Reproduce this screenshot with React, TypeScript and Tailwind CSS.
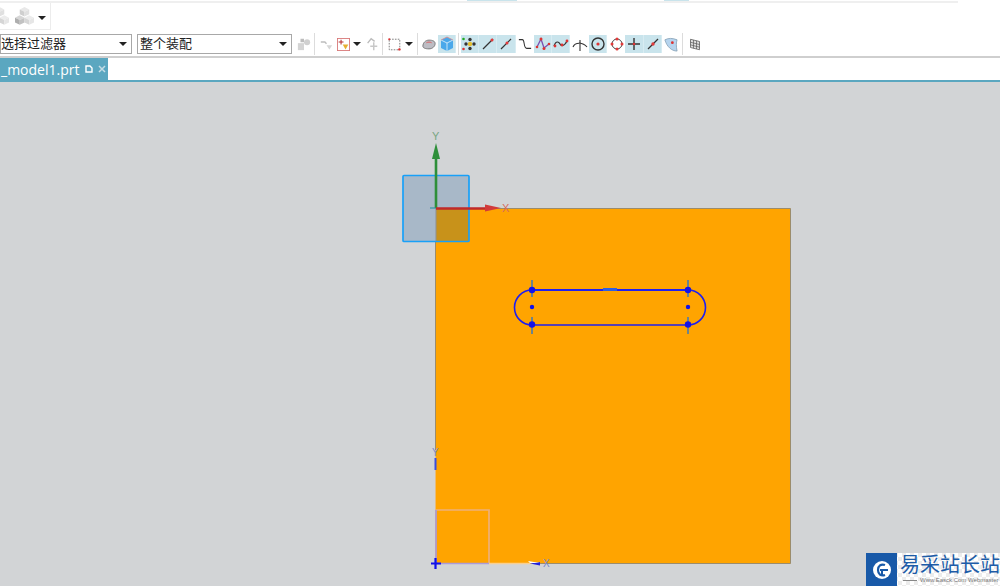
import type { ReactNode } from 'react';

const cjk = "font-['Liberation_Sans','Noto_Sans_CJK_SC',sans-serif]";

// highlighted toolbar button
function Tool({ w = 'w-[18px]', children }: { w?: string; children: ReactNode }) {
  return (
    <div className={`flex h-[18px] ${w} shrink-0 items-center justify-center border-r border-[#d8ecf2] bg-[#c9e4ec]`}>
      <svg width="16" height="16" viewBox="0 0 16 16" fill="none">
        {children}
      </svg>
    </div>
  );
}

// plain toolbar icon, no highlight
function Plain({ className, size = 16, children }: { className: string; size?: number; children: ReactNode }) {
  return (
    <div className={`flex shrink-0 justify-center ${className}`}>
      <svg width={size} height={size} viewBox="0 0 16 16" fill="none">
        {children}
      </svg>
    </div>
  );
}

function Sep({ className }: { className: string }) {
  return <div className={`h-[22px] w-px shrink-0 bg-[#dcdcdc] ${className}`} />;
}

function Caret() {
  return <div className="h-0 w-0 border-x-[4px] border-t-[4px] border-x-transparent border-t-[#222]" />;
}

function Select({ label, className }: { label: string; className: string }) {
  return (
    <div className={`flex h-[20px] shrink-0 items-center justify-between border border-[#a8a8a8] bg-white pr-[4px] text-[13px] text-[#222] ${className}`}>
      <span>{label}</span>
      <Caret />
    </div>
  );
}

function Cube3() {
  return (
    <>
      <path d="M8 0 12 2 8 4 4 2Z" fill="#e8e8e8" />
      <path d="M4 2 8 4V8L4 6Z" fill="#cfcfcf" />
      <path d="M12 2 8 4V8L12 6Z" fill="#e0e0e0" />
      <path d="M4 7 8 9 4 11 0 9Z" fill="#d6d6d6" />
      <path d="M0 9 4 11V15L0 13Z" fill="#aeaeae" />
      <path d="M8 9 4 11V15L8 13Z" fill="#c2c2c2" />
      <path d="M12 7 16 9 12 11 8 9Z" fill="#ececec" />
      <path d="M8 9 12 11V15L8 13Z" fill="#d6d6d6" />
      <path d="M16 9 12 11V15L16 13Z" fill="#e6e6e6" />
    </>
  );
}

export default function App() {
  return (
    <div className={`flex h-[586px] w-[1000px] flex-col overflow-hidden bg-white ${cjk}`}>
      {/* top strip */}
      <div className="flex h-[1px] shrink-0 bg-white pl-[467px]">
        <div className="h-full w-[50px] bg-[#c9e4ec]" />
        <div className="ml-[147px] h-full w-[25px] bg-[#c9e4ec]" />
      </div>
      <div className="h-[2px] w-[958px] shrink-0 bg-[#efefef]" />

      {/* quick access */}
      <div className="flex h-[27px] w-[51px] shrink-0 items-center border-r border-b border-[#ececec]">
        <div className="ml-[-10px] w-[19px]">
          <svg width="19" height="19" viewBox="0 0 16 16" fill="none">
            <Cube3 />
          </svg>
        </div>
        <div className="ml-[6px]">
          <svg width="19" height="19" viewBox="0 0 16 16" fill="none">
            <Cube3 />
          </svg>
        </div>
        <div className="ml-[4px] mt-[3px]">
          <Caret />
        </div>
      </div>

      {/* selection toolbar */}
      <div className="flex h-[28px] shrink-0 items-center border-b-2 border-[#cfcfcf] pt-[2px]">
        <Select label="选择过滤器" className="w-[132px]" />
        <Select label="整个装配" className="ml-[5px] w-[155px] pl-[2px]" />
        <Plain className="ml-[5px] w-[14px]" size={14}>
          <path d="M1 7h7v8H1z" fill="#d4d4d4" />
          <circle cx="11.500" cy="6" r="3.500" fill="#d0d0d0" />
          <path d="M4 2h4v4H4z" fill="#bdbdbd" />
        </Plain>
        <Sep className="ml-[3px] mr-[5px]" />
        <Plain className="w-[13px]" size={13}>
          <path d="M1 5h5l2 2" stroke="#bdbdbd" strokeWidth="1.800" />
          <path d="M8 9h7l-3.500 5z" fill="#d6d6d6" />
        </Plain>
        <Plain className="ml-[4px] w-[13px]" size={13}>
          <rect x="0.500" y="0.500" width="15" height="15" fill="#fff" stroke="#d87878" strokeWidth="1.200" />
          <path d="M5 2v6M2 5h6" stroke="#b53030" strokeWidth="1.300" />
          <path d="M7 8h7l-3.500 6z" fill="#e6b030" />
        </Plain>
        <div className="ml-[3px]">
          <Caret />
        </div>
        <Plain className="ml-[4px] w-[14px]" size={14}>
          <path d="M3 7 7 2l4 3" stroke="#bbb" strokeWidth="1.500" />
          <path d="M10 6v9M6 10.500h8" stroke="#c8c8c8" strokeWidth="1.700" />
        </Plain>
        <Sep className="ml-[3px] mr-[2px]" />
        <Plain className="ml-[3px] w-[13px]" size={13}>
          <rect x="1.500" y="1.500" width="13" height="13" stroke="#666" strokeDasharray="2 1.500" />
          <circle cx="14" cy="14" r="1.500" fill="#d33" />
          <circle cx="1.500" cy="1.500" r="1.300" fill="#d33" />
        </Plain>
        <div className="ml-[4px]">
          <Caret />
        </div>
        <Sep className="ml-[4px] mr-[4px]" />
        <Plain className="w-[14px]" size={15}>
          <path d="M1 10c0-4 3-7 7-7 4 0 7 1 7 4 0 3-3 6-7 6-4 0-7-1-7-3Z" fill="#bdbdc4" stroke="#6f6f6f" />
          <path d="M5 6c2-1 4-1 6 0" stroke="#d55" />
        </Plain>
        <div className="ml-[2px]">
          <Tool>
            <path d="M2 4 8 1l6 3v8l-6 3-6-3Z" fill="#4aa8ea" />
            <path d="M2 4l6 3 6-3M8 7v8" stroke="#e4f4fb" strokeWidth="0.800" />
            <path d="M2 4 8 1l6 3" stroke="#d88" strokeWidth="0.800" />
          </Tool>
        </div>
        <Sep className="ml-[2px] mr-[2px]" />
        <Tool>
          <circle cx="8" cy="8" r="2.200" fill="#e6c030" />
          <circle cx="8" cy="3.500" r="1.700" fill="#333" />
          <circle cx="8" cy="12.500" r="1.700" fill="#333" />
          <circle cx="4" cy="8" r="1.700" fill="#333" />
          <circle cx="12" cy="8" r="1.700" fill="#333" />
          <circle cx="1.500" cy="3" r="1.300" fill="#2a2" />
          <circle cx="1.500" cy="13" r="1.300" fill="#d33" />
        </Tool>
        <Tool>
          <path d="M3 13 13 3" stroke="#333" strokeWidth="1.200" />
          <circle cx="12" cy="4" r="1.500" fill="#e23a3a" />
        </Tool>
        <Tool w="w-[19px]">
          <path d="M3 13 13 3" stroke="#333" strokeWidth="1.200" />
          <circle cx="9" cy="7" r="1.500" fill="#e23a3a" />
        </Tool>
        <Plain className="ml-[2px] w-[14px]">
          <path d="M1 3h4c3 0 1 10 5 10h5" stroke="#333" strokeWidth="1.200" />
        </Plain>
        <div className="ml-[2px] flex">
          <Tool>
            <path d="M2 11 6 3l3 9 5-4" stroke="#7a4fb0" strokeWidth="1.300" />
            <circle cx="6" cy="3" r="1.500" fill="#d33" />
            <circle cx="9" cy="12.500" r="1.500" fill="#d33" />
            <circle cx="2" cy="11" r="1.300" fill="#d33" />
            <circle cx="14" cy="8" r="1.300" fill="#d33" />
          </Tool>
          <Tool>
            <path d="M1 10c2-6 5-4 6-2s4 3 7-3" stroke="#333" strokeWidth="1.200" />
            <circle cx="2" cy="10" r="1.400" fill="#d33" />
            <circle cx="9" cy="9" r="1.400" fill="#d33" />
            <circle cx="14" cy="5" r="1.400" fill="#d33" />
          </Tool>
        </div>
        <Plain className="ml-[2px] w-[16px]">
          <path d="M1 11c2-5 10-5 14 0M8 4v11" stroke="#333" strokeWidth="1.100" />
        </Plain>
        <div className="ml-[1px]">
          <Tool>
            <circle cx="8" cy="8" r="6" stroke="#333" strokeWidth="1.400" />
            <circle cx="8" cy="8" r="1.600" fill="#d33" />
          </Tool>
        </div>
        <Plain className="ml-[1px] w-[17px]">
          <circle cx="8" cy="8" r="5" stroke="#444" />
          <circle cx="8" cy="3" r="1.500" fill="#e23a3a" />
          <circle cx="8" cy="13" r="1.500" fill="#e23a3a" />
          <circle cx="3" cy="8" r="1.500" fill="#e23a3a" />
          <circle cx="13" cy="8" r="1.500" fill="#e23a3a" />
        </Plain>
        <Tool w="w-[19px]">
          <path d="M8 2v12M2 8h12" stroke="#333" strokeWidth="1.400" />
          <circle cx="8" cy="8" r="1.300" fill="#d33" />
        </Tool>
        <Tool>
          <path d="M3 13 13 3" stroke="#333" strokeWidth="1.200" />
          <circle cx="8" cy="8" r="1.700" fill="#e23a3a" />
        </Tool>
        <Plain className="ml-[1px] w-[15px]" size={15}>
          <path d="M2 3c4-2 8-2 13 0-1 3-1 7 0 12-6 0-11-5-13-12Z" fill="#b6d4ee" stroke="#7f9bb0" strokeWidth="0.800" />
          <circle cx="10" cy="6" r="1.500" fill="#d33" />
        </Plain>
        <Sep className="ml-[4px] mr-[3px]" />
        <Plain className="ml-[3px] w-[12px]" size={13}>
          <path d="M2 1 14 4V15L2 12Z" fill="#ddd" stroke="#555" />
          <path d="M6 2V13M10 3V14M2 5 14 8M2 8.500 14 11.500" stroke="#555" strokeWidth="0.900" />
        </Plain>
      </div>

      {/* tab row */}
      <div className="flex h-[24px] shrink-0 border-b-2 border-[#5ba7c0] bg-white">
        <div className="flex h-[22px] w-[108px] items-center bg-[#5ba7c0] text-white">
          <span className="ml-[1px] font-['Open_Sans',sans-serif] text-[14px]">_model1.prt</span>
          <svg width="8" height="8" viewBox="0 0 8 8" fill="none" className="ml-[6px]">
            <path d="M1 1h4l2 2v4H1z" stroke="#fff" strokeWidth="1.400" />
          </svg>
          <svg width="8" height="8" viewBox="0 0 8 8" fill="none" className="ml-[5px]">
            <path d="M1 1 7 7M7 1 1 7" stroke="#c4dde6" strokeWidth="1.500" />
          </svg>
        </div>
      </div>

      {/* graphics window */}
      <div className="relative flex-1 bg-[#d2d4d6]">
        <svg width="1000" height="504" viewBox="0 82 1000 504" className="absolute left-0 top-0" fill="none">
          {/* sheet body */}
          <rect x="435.500" y="208.500" width="355" height="355" fill="#ffa400" />
          <path d="M435.500 450V208.500H790.500V563.500H540" stroke="#9b8c6c" />
          <path d="M435.500 450V510" stroke="#e8bc78" />

          {/* datum square */}
          <rect x="403" y="175.500" width="66" height="66" fill="#a8b8c8" />
          <rect x="436" y="209" width="33" height="32" fill="#c8921a" />
          <path d="M436 208v33" stroke="#8f8f8f" />
          <rect x="403" y="175.500" width="66" height="66" rx="1" stroke="#18a0f8" strokeWidth="1.700" />

          {/* csys */}
          <path d="M436 208V155" stroke="#2e8f3a" strokeWidth="2.600" />
          <path d="M436 143 432 159H440Z" fill="#2e8f3a" />
          <path d="M430 208H436" stroke="#1a8f9f" />
          <path d="M436 208.500H486" stroke="#c02a2a" strokeWidth="2.600" />
          <path d="M501 208 485 204.500V211.500Z" fill="#d23a3a" />
          <text x="432" y="140" fontSize="11" fill="#79a683" fontFamily="Liberation Sans">Y</text>
          <text x="502" y="212" fontSize="11" fill="#d66a5c" fontFamily="Liberation Sans">X</text>

          {/* slot */}
          <path d="M532 290H688A17.500 17.500 0 0 1 688 325H532A17.500 17.500 0 0 1 532 290Z" stroke="#1f1ff0" strokeWidth="1.600" />
          <path d="M532 290H688" stroke="#1f1ff0" strokeWidth="2" />
          <path d="M603 289.500H617" stroke="#2f5fe0" strokeWidth="3" />
          <path d="M532 280V297M688 280V297M532 317V334M688 317V334" stroke="#3f78b8" strokeWidth="1.500" />
          <g fill="#1212e8">
            <circle cx="532" cy="290" r="3.200" />
            <circle cx="688" cy="290" r="3.200" />
            <circle cx="532" cy="324.500" r="3.200" />
            <circle cx="688" cy="324.500" r="3.200" />
            <circle cx="532" cy="307" r="2.200" />
            <circle cx="688" cy="307" r="2.200" />
          </g>

          {/* second csys, lower left */}
          <path d="M436 510H489V563" stroke="#eeb078" strokeWidth="1.700" />
          <path d="M436 510V563.500H489" stroke="#ab9bd8" strokeWidth="1.700" />
          <path d="M489 563.500H530" stroke="#f9cf90" strokeWidth="1.500" />
          <path d="M435.500 458V470" stroke="#3a4fe0" strokeWidth="2" />
          <path d="M530 563.500 540 562V565.500Z" fill="#2222dd" />
          <path d="M528 561 540 563H530Z" fill="#fff" />
          <path d="M431 563.500H441M435.500 558V569" stroke="#1212e8" strokeWidth="2.200" />
          <text x="432" y="456" fontSize="10" fill="#7a88c8" fontFamily="Liberation Sans">Y</text>
          <text x="543" y="567" fontSize="10" fill="#7a88c8" fontFamily="Liberation Sans">X</text>
        </svg>

        {/* watermark */}
        <div className="absolute bottom-0 right-0 flex h-[33px] w-[134px] bg-[repeating-conic-gradient(#ececec_0_25%,#ffffff_0_50%)] bg-[length:8px_8px]">
          <div className="flex h-full w-[31px] shrink-0 items-center justify-center bg-[#1859a8]">
            <svg width="22" height="22" viewBox="0 0 22 22" fill="none">
              <circle cx="11" cy="11" r="9" fill="#fff" />
              <path d="M14 6C10 4.500 7 7 7 11s3 6.500 7 5" stroke="#1859a8" strokeWidth="2.200" />
              <path d="M9 11h8" stroke="#1859a8" strokeWidth="2" />
              <path d="M11 11v5" stroke="#1859a8" strokeWidth="2" />
            </svg>
          </div>
          <div className="ml-[3px] flex min-w-0 flex-col">
            <span className="mt-[2px] whitespace-nowrap text-[20px] leading-[21px] text-[#1d5ca8]">易采站长站</span>
            <div className="flex items-center">
              <div className="ml-[3px] h-px w-[14px] shrink-0 bg-[#888]" />
              <span className="ml-[3px] whitespace-nowrap text-[6px] leading-[8px] text-[#777]">Www.Easck.Com Webmaster</span>
            </div>
          </div>
        </div>
      </div>
    </div>
  );
}
